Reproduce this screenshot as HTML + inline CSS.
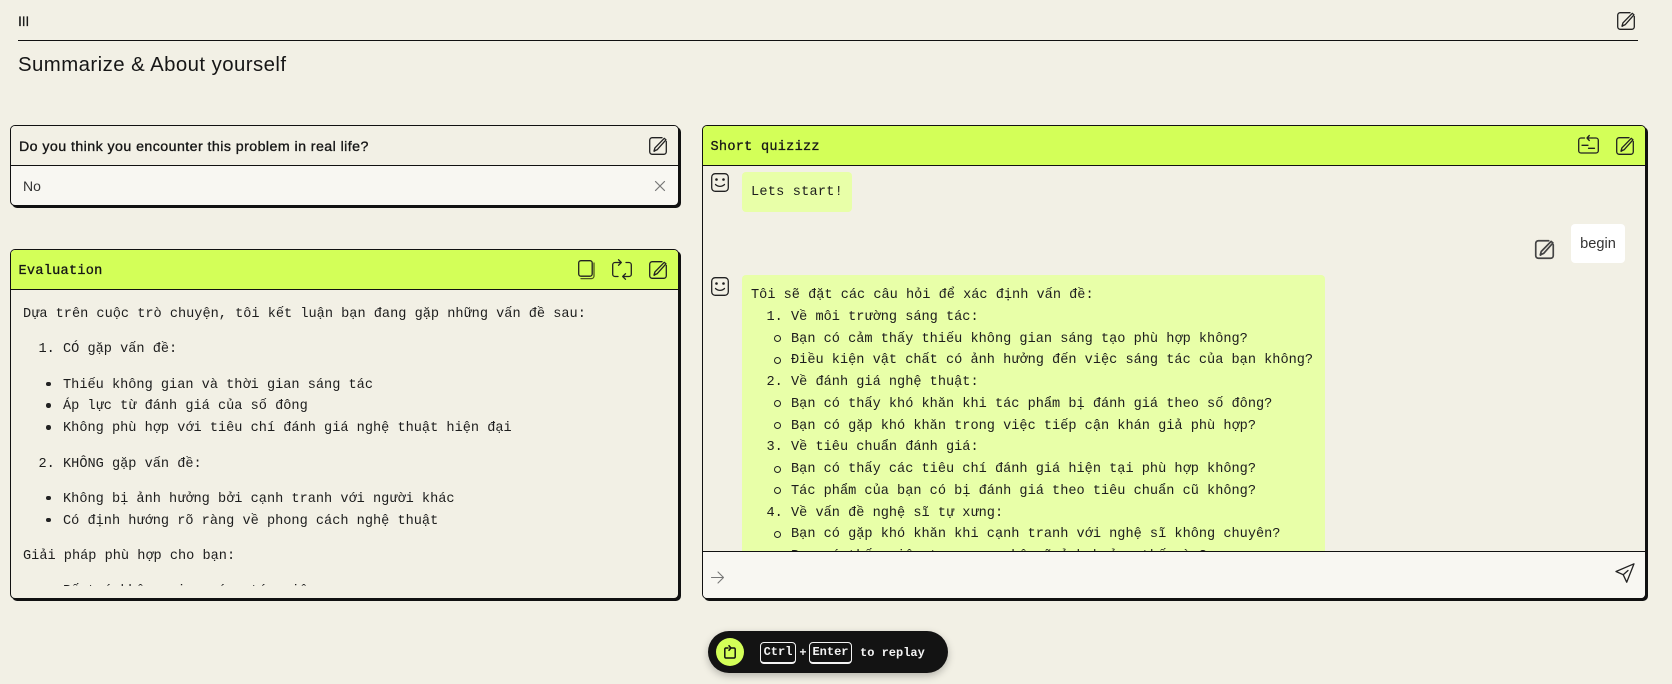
<!DOCTYPE html>
<html lang="vi">
<head>
<meta charset="utf-8">
<title>Summarize &amp; About yourself</title>
<style>
*{box-sizing:border-box}
html,body{margin:0;padding:0;width:1672px;height:684px;overflow:hidden;background:#f2f0e5;color:#161616;font-family:"Liberation Sans",sans-serif}
.abs{position:absolute}
svg{position:absolute;fill:none;stroke:#222;stroke-width:1.3;stroke-linecap:round;stroke-linejoin:round;overflow:visible}
.mono{font-family:"Liberation Mono","DejaVu Sans Mono",monospace;font-size:13.6px;line-height:21.76px;color:#1d1d1d}
.panel{position:absolute;border:1px solid #111;border-radius:5px;box-shadow:2px 2px 0 #111;background:#f2f0e5;overflow:hidden}
.head{position:absolute;left:0;right:0;top:0;height:40px;border-bottom:1px solid #111}
.lime{background:#d3ff58}
.title{position:absolute;left:7.5px;top:11px;font-weight:400;letter-spacing:.25px;-webkit-text-stroke:.3px #161616;color:#161616}
#body p{margin:0 0 13.6px}
#body ol,#body ul{margin:0 0 13.6px;padding:0 0 0 40px}
#body li{margin:0}
ul{list-style:none}
ul li{position:relative}
ul li::before{content:"";position:absolute;left:-17px;top:7px;width:4.5px;height:4.5px;border-radius:50%;background:#222}
.bubble{position:absolute;background:#e8ffa8;border-radius:4px;padding:10px 9px;white-space:nowrap}
.bubble ol{margin:0;padding:0 0 0 40px}
.bubble ul{margin:0;padding:0}
.bubble ul li::before{left:-17.5px;top:6.5px;width:5px;height:5px;background:none;border:1px solid #222}
kbd{position:absolute;top:642px;height:22px;border:1.5px solid #f4f4f4;border-bottom-width:2.5px;border-radius:4px;color:#f4f4f4;font:bold 12px/18px "Liberation Mono",monospace;text-align:center}
</style>
</head>
<body>
<div class="abs" style="left:18px;top:13px;font-size:14px;line-height:16px;-webkit-text-stroke:.2px #161616;letter-spacing:-.2px">III</div>
<svg style="left:1617px;top:12px" width="18" height="18" viewBox="0 0 18 18"><use href="#edit"/></svg>
<div class="abs" style="left:18px;top:40px;width:1620px;height:1px;background:#111"></div>
<div class="abs" style="left:18px;top:52px;font-size:20.4px;line-height:26px;letter-spacing:.43px">Summarize &amp; About yourself</div>

<svg width="0" height="0" style="left:0;top:0"><defs>
<g id="edit"><path d="M13 .7H3.200A2.500 2.500 0 0 0 .7 3.200v11.600a2.500 2.500 0 0 0 2.500 2.500h11.600a2.500 2.500 0 0 0 2.500-2.500V4.500"/><path d="M15.300 1.300l1.700 1.500-8.700 9.800-3.300 1.500.9-3.200z"/><path d="M5.200 14.300l1.100-1"/></g>
</defs></svg>

<!-- Question panel -->
<div class="panel" style="left:10px;top:125px;width:669px;height:81px;background:#f8f7f2">
  <div class="head" style="background:#f2f0e5"></div>
  <div class="abs" style="left:8px;top:12px;font-size:14.2px;line-height:18px;font-weight:400;letter-spacing:.44px;-webkit-text-stroke:.35px #161616">Do you think you encounter this problem in real life?</div>
  <div class="abs" style="left:12px;top:51px;font-size:14px;line-height:18px;color:#333">No</div>
  <svg style="left:644px;top:55px" width="10" height="10" viewBox="0 0 10 10"><path style="stroke:#777;stroke-width:1.200" d="M.5.5l9 9M9.500.5l-9 9"/></svg>
  <svg style="left:638px;top:11px" width="18" height="18" viewBox="0 0 18 18"><use href="#edit"/></svg>
</div>

<!-- Evaluation panel -->
<div class="panel" style="left:10px;top:249px;width:669px;height:350px">
  <div class="head lime"></div>
  <div class="title mono">Evaluation</div>
  <svg style="left:567px;top:10px" width="17" height="19" viewBox="0 0 17 19"><rect x=".7" y=".7" width="13.500" height="15.500" rx="2.200"/><path style="stroke:#4d5a1e" d="M16 3v13a2.600 2.600 0 0 1-2.600 2.600H3"/></svg>
  <svg style="left:601px;top:9px" width="20" height="21" viewBox="0 0 20 21"><path d="M8 3.500H3a2.300 2.300 0 0 0-2.300 2.300v9.400A2.300 2.300 0 0 0 3 17.500h3"/><path d="M12 17.500h5a2.300 2.300 0 0 0 2.300-2.300V5.800A2.300 2.300 0 0 0 17 3.500h-3"/><path d="M6.500.7l2.800 2.800-2.800 2.800M13.500 14.700l-2.800 2.800 2.800 2.800"/></svg>
  <svg style="left:638px;top:11px" width="18" height="18" viewBox="0 0 18 18"><use href="#edit"/></svg>
  <div id="body" class="mono abs" style="left:12px;top:54px;width:645px;height:281.500px;overflow:hidden">
    <p>Dựa trên cuộc trò chuyện, tôi kết luận bạn đang gặp những vấn đề sau:</p>
    <ol><li>CÓ gặp vấn đề:</li></ol>
    <ul><li>Thiếu không gian và thời gian sáng tác</li><li>Áp lực từ đánh giá của số đông</li><li>Không phù hợp với tiêu chí đánh giá nghệ thuật hiện đại</li></ul>
    <ol start="2"><li>KHÔNG gặp vấn đề:</li></ol>
    <ul><li>Không bị ảnh hưởng bởi cạnh tranh với người khác</li><li>Có định hướng rõ ràng về phong cách nghệ thuật</li></ul>
    <p>Giải pháp phù hợp cho bạn:</p>
    <ul><li>Bố trí không gian sáng tác riêng</li></ul>
  </div>
</div>

<!-- Chat panel -->
<div class="panel" style="left:702px;top:125px;width:944px;height:474px">
  <div class="head lime"></div>
  <div class="title mono">Short quizizz</div>
  <svg style="left:875px;top:9px" width="21" height="20" viewBox="0 0 21 20"><path d="M6.500 3H3A2.300 2.300 0 0 0 .7 5.300v10.400A2.300 2.300 0 0 0 3 18h15a2.300 2.300 0 0 0 2.300-2.300V5.300A2.300 2.300 0 0 0 18 3h-4"/><path d="M14 3H9.500M11.300.5 9 3l2.300 2.500"/><path d="M4 10.300h6M10.500 13.300h6"/></svg>
  <svg style="left:913px;top:11px" width="18" height="18" viewBox="0 0 18 18"><use href="#edit"/></svg>
  <div class="abs" style="left:0;right:0;top:40px;height:385px;overflow:hidden">
    <svg style="left:8px;top:7px" width="18" height="19" viewBox="0 0 18 19"><rect x=".7" y=".7" width="16.600" height="17.600" rx="3.500"/><circle cx="5.500" cy="6.500" r="1.300" style="fill:#1c1c1c;stroke:none"/><circle cx="12.500" cy="6.500" r="1.300" style="fill:#1c1c1c;stroke:none"/><path d="M4.500 11.500c2.500 2.500 6.500 2.500 9 0"/></svg>
    <div class="bubble mono" style="left:39px;top:6px;width:110px;height:40px;padding-top:10px;letter-spacing:.2px">Lets start!</div>
    <svg style="left:832px;top:74px;stroke:#444;stroke-width:1.600" width="19" height="19" viewBox="0 0 18 18"><use href="#edit"/></svg>
    <div class="abs" style="left:868px;top:58px;width:54px;height:39px;background:#fff;border-radius:4px;text-align:center;font-size:14.600px;line-height:40px;color:#333">begin</div>
    <svg style="left:8px;top:111px" width="18" height="19" viewBox="0 0 18 19"><rect x=".7" y=".7" width="16.600" height="17.600" rx="3.500"/><circle cx="5.500" cy="6.500" r="1.300" style="fill:#1c1c1c;stroke:none"/><circle cx="12.500" cy="6.500" r="1.300" style="fill:#1c1c1c;stroke:none"/><path d="M4.500 11.500c2.500 2.500 6.500 2.500 9 0"/></svg>
    <div class="bubble mono" style="left:39px;top:109px;width:583px">
      Tôi sẽ đặt các câu hỏi để xác định vấn đề:
      <ol style="padding-left:40px">
        <li>Về môi trường sáng tác:<ul><li>Bạn có cảm thấy thiếu không gian sáng tạo phù hợp không?</li><li>Điều kiện vật chất có ảnh hưởng đến việc sáng tác của bạn không?</li></ul></li>
        <li>Về đánh giá nghệ thuật:<ul><li>Bạn có thấy khó khăn khi tác phẩm bị đánh giá theo số đông?</li><li>Bạn có gặp khó khăn trong việc tiếp cận khán giả phù hợp?</li></ul></li>
        <li>Về tiêu chuẩn đánh giá:<ul><li>Bạn có thấy các tiêu chí đánh giá hiện tại phù hợp không?</li><li>Tác phẩm của bạn có bị đánh giá theo tiêu chuẩn cũ không?</li></ul></li>
        <li>Về vấn đề nghệ sĩ tự xưng:<ul><li>Bạn có gặp khó khăn khi cạnh tranh với nghệ sĩ không chuyên?</li><li>Bạn có thấy việc tự xưng nghệ sĩ ảnh hưởng thế nào?</li></ul></li>
      </ol>
    </div>
  </div>
  <div class="abs" style="left:0;right:0;top:425px;bottom:0;background:#f8f7f2;border-top:1px solid #111"></div>
  <svg style="left:8px;top:445px" width="13" height="13" viewBox="0 0 13 13"><path style="stroke:#777;stroke-width:1.100" d="M.5 6.500h12M7 1l5.500 5.500L7 12"/></svg>
  <svg style="left:912px;top:437px" width="20" height="20" viewBox="0 0 20 20"><path d="M19 .8 1 8.500l7.200 3.200 3.500 7.500z"/><path d="M8.200 11.700 13 7.500"/></svg>
</div>

<!-- Replay pill -->
<div class="abs" style="left:708px;top:631px;width:240px;height:42px;border-radius:21px;background:#131313;box-shadow:0 3px 8px rgba(0,0,0,.25)"></div>
<div class="abs" style="left:716px;top:638px;width:28px;height:28px;border-radius:50%;background:#d3ff58"></div>
<svg style="left:724px;top:645px" width="12" height="14" viewBox="0 0 12 14"><path style="stroke:#111;stroke-width:1.500" d="M4 3H2A1.300 1.300 0 0 0 .8 4.300v7.500A1.300 1.300 0 0 0 2 13h8a1.300 1.300 0 0 0 1.200-1.200V4.300A1.300 1.300 0 0 0 10 3H6M5 .7 7 3 5 5.300"/></svg>
<kbd style="left:760px;width:36px">Ctrl</kbd>
<div class="abs" style="left:798px;top:644px;width:10px;text-align:center;color:#eee;font:bold 12px/18px 'Liberation Mono',monospace">+</div>
<kbd style="left:809px;width:43px">Enter</kbd>
<div class="abs" style="left:860px;top:644px;color:#f4f4f4;font:bold 12px/18px 'Liberation Mono',monospace;white-space:nowrap">to replay</div>
</body>
</html>
